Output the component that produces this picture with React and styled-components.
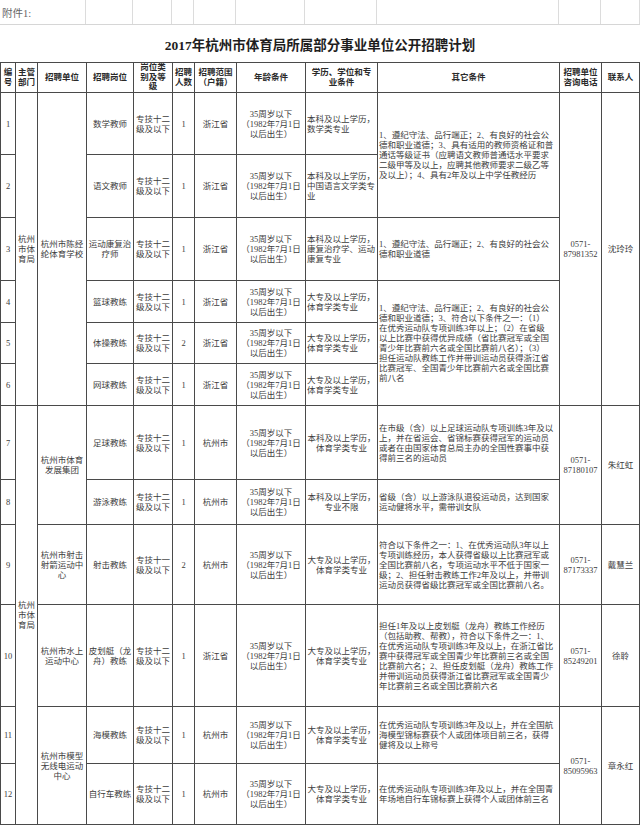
import React from 'react';
import styled, { createGlobalStyle } from 'styled-components';

const GlobalStyle = createGlobalStyle`
  html, body { margin: 0; padding: 0; background: #fff; }
  body { font-family: "Liberation Serif", "Noto Sans CJK SC", serif; color: #3c3c3c; }
`;

const COLS = '15px 22px 49px 47px 39px 22px 42px 69px 72px 182px 42px 38px';
const ROWS = '30px 62px 63px 63px 42px 41px 42px 74px 45px 80px 102px 57px 61px';

const Page = styled.div`
  width: 640px;
  overflow: hidden;
`;

const NoteBar = styled.div`
  display: grid;
  grid-template-columns: 86px 47px 39px 22px 42px 69px 72px 182px 42px 39px;
  height: 24px;
  border-bottom: 1px solid #d6d6d6;
`;

const NoteCell = styled.div`
  border-right: 1px solid #dcdcdc;
  display: flex;
  align-items: center;
  padding-left: 2px;
  font-size: 10.5px;
  color: #666;
  white-space: nowrap;
`;

const TitleRow = styled.div`
  height: 37px;
  display: flex;
  align-items: center;
  justify-content: center;
  font-size: 13.5px;
  font-weight: 700;
  color: #1e1e1e;
  letter-spacing: 0;
`;

const Table = styled.div`
  display: grid;
  grid-template-columns: ${COLS};
  grid-template-rows: ${ROWS};
  border-left: 1px solid #4a4a4a;
  border-top: 1px solid #4a4a4a;
  font-size: 8.5px;
  line-height: 10px;
`;

const Cell = styled.div`
  grid-row: ${p => p.$r} / span ${p => p.$span || 1};
  grid-column: ${p => p.$c};
  border-right: 1px solid #4a4a4a;
  border-bottom: 1px solid #4a4a4a;
  display: flex;
  flex-direction: column;
  justify-content: center;
  align-items: ${p => (p.$left ? 'flex-start' : 'center')};
  text-align: ${p => (p.$left ? 'left' : 'center')};
  padding: 0 ${p => (p.$left ? '0 0 1px' : '0')};
  white-space: nowrap;
  overflow: hidden;
  background: #fff;
`;

const HeadCell = styled(Cell)`
  font-weight: 700;
  color: #2a2a2a;
  line-height: 9.6px;
`;

const OtherCell = styled(Cell)`
  padding-left: 1px;
`;

const Line = styled.span`
  display: block;
`;

const Lines = ({ lines }) => lines.map((l, i) => <Line key={i}>{l}</Line>);

const headers = [
  ['编', '号'],
  ['主管', '部门'],
  ['招聘单位'],
  ['招聘岗位'],
  ['岗位类', '别及等', '级'],
  ['招聘', '人数'],
  ['招聘范围', '（户籍）'],
  ['年龄条件'],
  ['学历、学位和专', '业条件'],
  ['其它条件'],
  ['招聘单位', '咨询电话'],
  ['联系人'],
];

const L12 = ['专技十二', '级及以下'];
const AGE = ['35周岁以下', '（1982年7月1日', '以后出生）'];
const DZ = ['大专及以上学历，', '体育学类专业'];

const jobs = [
  { post: ['数学教师'], level: L12, num: 1, scope: '浙江省', edu: ['本科及以上学历，', '数学类专业'], left: true },
  { post: ['语文教师'], level: L12, num: 1, scope: '浙江省', edu: ['本科及以上学历，', '中国语言文学类专', '业'], left: true },
  { post: ['运动康复治', '疗师'], level: L12, num: 1, scope: '浙江省', edu: ['本科及以上学历，', '康复治疗学、运动', '康复专业'], left: true },
  { post: ['篮球教练'], level: L12, num: 1, scope: '浙江省', edu: DZ, left: true },
  { post: ['体操教练'], level: L12, num: 2, scope: '浙江省', edu: DZ, left: true },
  { post: ['网球教练'], level: L12, num: 1, scope: '浙江省', edu: DZ, left: true },
  { post: ['足球教练'], level: L12, num: 1, scope: '杭州市', edu: ['本科及以上学历，', '体育学类专业'] },
  { post: ['游泳教练'], level: L12, num: 1, scope: '杭州市', edu: ['本科及以上学历，', '专业不限'] },
  { post: ['射击教练'], level: ['专技十一', '级及以下'], num: 2, scope: '杭州市', edu: DZ },
  { post: ['皮划艇（龙', '舟）教练'], level: L12, num: 1, scope: '浙江省', edu: DZ },
  { post: ['海模教练'], level: L12, num: 1, scope: '杭州市', edu: DZ },
  { post: ['自行车教练'], level: L12, num: 1, scope: '杭州市', edu: DZ },
];

const depts = [
  { from: 1, span: 6, lines: ['杭州', '市体', '育局'] },
  { from: 7, span: 6, lines: ['杭州', '市体', '育局'] },
];

const units = [
  { from: 1, span: 6, lines: ['杭州市陈经', '纶体育学校'] },
  { from: 7, span: 2, lines: ['杭州市体育', '发展集团'] },
  { from: 9, span: 1, lines: ['杭州市射击', '射箭运动中', '心'] },
  { from: 10, span: 1, lines: ['杭州市水上', '运动中心'] },
  { from: 11, span: 2, lines: ['杭州市模型', '无线电运动', '中心'] },
];

const others = [
  {
    from: 1, span: 2, lines: [
      '1、遵纪守法、品行端正；2、有良好的社会公',
      '德和职业道德；3、具有适用的教师资格证和普',
      '通话等级证书（应聘语文教师普通话水平要求',
      '二级甲等及以上，应聘其他教师要求二级乙等',
      '及以上）；4、具有2年及以上中学任教经历',
    ],
  },
  { from: 3, span: 1, lines: ['1、遵纪守法、品行端正；2、有良好的社会公', '德和职业道德'] },
  {
    from: 4, span: 3, lines: [
      '1、遵纪守法、品行端正；2、有良好的社会公',
      '德和职业道德；3、符合以下条件之一：（1）',
      '在优秀运动队专项训练3年以上；（2）在省级',
      '以上比赛中获得优异成绩（省比赛冠军或全国',
      '青少年比赛前六名或全国比赛前八名）；（3）',
      '担任运动队教练工作并带训运动员获得浙江省',
      '比赛冠军、全国青少年比赛前六名或全国比赛',
      '前八名',
    ],
  },
  {
    from: 7, span: 1, lines: [
      '在市级（含）以上足球运动队专项训练3年及以',
      '上，并在省运会、省锦标赛获得冠军的运动员',
      '或者在由国家体育总局主办的全国性赛事中获',
      '得前三名的运动员',
    ],
  },
  { from: 8, span: 1, lines: ['省级（含）以上游泳队退役运动员，达到国家', '运动健将水平，需带训女队'] },
  {
    from: 9, span: 1, lines: [
      '符合以下条件之一：1、在优秀运动队3年以上',
      '专项训练经历，本人获得省级以上比赛冠军或',
      '全国比赛前八名，专项运动水平不低于国家一',
      '级；2、担任射击教练工作2年及以上，并带训',
      '运动员获得省级比赛冠军或全国比赛前八名。',
    ],
  },
  {
    from: 10, span: 1, lines: [
      '担任1年及以上皮划艇（龙舟）教练工作经历',
      '（包括助教、帮教），符合以下条件之一：1、',
      '在优秀运动队专项训练3年及以上，在浙江省比',
      '赛中获得冠军或全国青少年比赛前三名或全国',
      '比赛前六名；2、担任皮划艇（龙舟）教练工作',
      '并带训运动员获得浙江省比赛冠军或全国青少',
      '年比赛前三名或全国比赛前六名',
    ],
  },
  {
    from: 11, span: 1, lines: [
      '在优秀运动队专项训练3年及以上，并在全国航',
      '海模型锦标赛获个人或团体项目前三名，获得',
      '健将及以上称号',
    ],
  },
  {
    from: 12, span: 1, lines: [
      '在优秀运动队专项训练3年及以上，并在全国青',
      '年场地自行车锦标赛上获得个人或团体前三名',
    ],
  },
];

const contacts = [
  { from: 1, span: 6, phone: '87981352', name: '沈玲玲' },
  { from: 7, span: 2, phone: '87180107', name: '朱红虹' },
  { from: 9, span: 1, phone: '87173337', name: '戴慧兰' },
  { from: 10, span: 1, phone: '85249201', name: '徐聆' },
  { from: 11, span: 2, phone: '85095963', name: '章永红' },
];

export default function App() {
  return (
    <Page>
      <GlobalStyle />
      <NoteBar>
        <NoteCell>附件1:</NoteCell>
        {Array.from({ length: 9 }).map((_, i) => <NoteCell key={i} />)}
      </NoteBar>
      <TitleRow>2017年杭州市体育局所属部分事业单位公开招聘计划</TitleRow>
      <Table>
        {headers.map((h, i) => (
          <HeadCell key={'h' + i} $r={1} $c={i + 1}>
            <Lines lines={h} />
          </HeadCell>
        ))}
        {jobs.map((j, i) => {
          const r = i + 2;
          return (
            <React.Fragment key={'j' + i}>
              <Cell $r={r} $c={1}>{i + 1}</Cell>
              <Cell $r={r} $c={4}><Lines lines={j.post} /></Cell>
              <Cell $r={r} $c={5}><Lines lines={j.level} /></Cell>
              <Cell $r={r} $c={6}>{j.num}</Cell>
              <Cell $r={r} $c={7}>{j.scope}</Cell>
              <Cell $r={r} $c={8}><Lines lines={AGE} /></Cell>
              <Cell $r={r} $c={9} $left={j.left}><Lines lines={j.edu} /></Cell>
            </React.Fragment>
          );
        })}
        {depts.map((d, i) => (
          <Cell key={'d' + i} $r={d.from + 1} $span={d.span} $c={2}><Lines lines={d.lines} /></Cell>
        ))}
        {units.map((u, i) => (
          <Cell key={'u' + i} $r={u.from + 1} $span={u.span} $c={3}><Lines lines={u.lines} /></Cell>
        ))}
        {others.map((o, i) => (
          <OtherCell key={'o' + i} $r={o.from + 1} $span={o.span} $c={10} $left><Lines lines={o.lines} /></OtherCell>
        ))}
        {contacts.map((c, i) => (
          <React.Fragment key={'c' + i}>
            <Cell $r={c.from + 1} $span={c.span} $c={11}><Lines lines={['0571-', c.phone]} /></Cell>
            <Cell $r={c.from + 1} $span={c.span} $c={12}>{c.name}</Cell>
          </React.Fragment>
        ))}
      </Table>
    </Page>
  );
}
